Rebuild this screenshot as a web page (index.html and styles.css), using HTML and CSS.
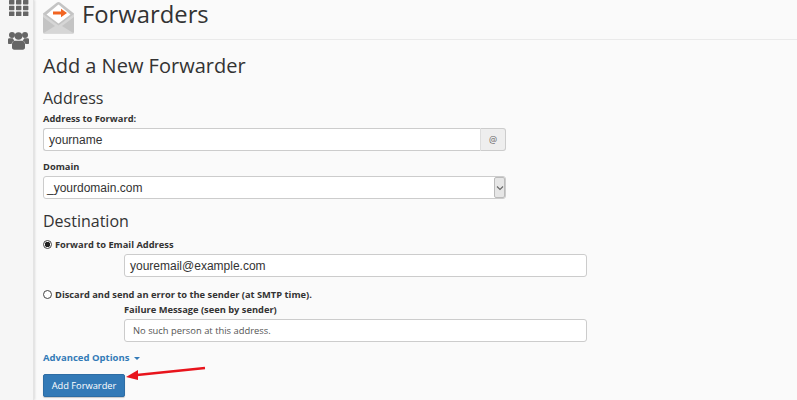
FILE: index.html
```html
<!DOCTYPE html>
<html lang="en">
<head>
<meta charset="utf-8">
<title>Forwarders</title>
<link rel="stylesheet" href="styles.css">
</head>
<body>
<div class="app">
  <nav class="sidebar">
    <svg class="nav-grid" width="20" height="16" viewBox="0 0 20 16"><g fill="#666"><rect x="0" y="0" width="5.4" height="4.4" rx=".6"/><rect x="7" y="0" width="5.4" height="4.4" rx=".6"/><rect x="14" y="0" width="5.4" height="4.4" rx=".6"/><rect x="0" y="5.8" width="5.4" height="4.4" rx=".6"/><rect x="7" y="5.8" width="5.4" height="4.4" rx=".6"/><rect x="14" y="5.8" width="5.4" height="4.4" rx=".6"/><rect x="0" y="11.6" width="5.4" height="4.4" rx=".6"/><rect x="7" y="11.6" width="5.4" height="4.4" rx=".6"/><rect x="14" y="11.6" width="5.4" height="4.4" rx=".6"/></g></svg>
    <svg class="nav-users" width="21" height="20" viewBox="0 0 21 20"><g fill="#666"><circle cx="4" cy="5" r="3"/><circle cx="17" cy="5" r="3"/><circle cx="10.5" cy="6" r="3.8"/><path d="M0 9.5C0 8.6.7 8.2 1.6 8.2h3.2c.4 1 .9 1.6 1.5 2.2-1.6.8-2.5 2-2.7 3.6H1c-.6 0-1-.4-1-1z"/><path d="M21 9.5c0-.9-.7-1.3-1.6-1.3h-3.2c-.4 1-.9 1.6-1.5 2.2 1.6.8 2.5 2 2.7 3.6H20c.6 0 1-.4 1-1z"/><path d="M7 10.8h7c1.8 0 3 1.4 3 3.4v3.4c0 1.3-.9 2.2-2.2 2.2H6.200C4.900 19.800 4 18.900 4 17.600v-3.400c0-2 1.200-3.400 3-3.400z"/></g></svg>
  </nav>
  <main class="main">
    <header class="page-head">
      <svg class="page-icon" width="33" height="33" viewBox="0 0 33 33"><path d="M1 12.500 15 1.500a2.500 2.500 0 0 1 3 0l14 11v18.500a1.500 1.500 0 0 1-1.500 1.500h-28A1.500 1.500 0 0 1 1 31z" fill="#c4c4c4"/><path d="M4.500 13.500 16.500 3.500l12 10-12 9z" fill="#fff"/><path d="M1 13l15.500 11.500L32 13v3L20 25l12 7.500H1L13 25 1 16z" fill="#d6d6d6"/><path d="M11 10.500h8V7.800l6 4.200-6 4.200v-2.700h-8z" fill="#f26522"/></svg>
      <h1 class="page-title">Forwarders</h1>
    </header>
    <h2 class="section-title">Add a New Forwarder</h2>
    <h3 class="sub-title first">Address</h3>
    <label class="field-label">Address to Forward:</label>
    <div class="input-group">
      <div class="input group-input">yourname</div>
      <div class="addon">@</div>
    </div>
    <label class="field-label domain-label">Domain</label>
    <div class="select-box">
      <span class="select-text">_yourdomain.com</span>
      <span class="select-btn"><svg width="8" height="6" viewBox="0 0 8 6"><path d="M1 1.500 4 4.500 7 1.500" fill="none" stroke="#666" stroke-width="1.100"/></svg></span>
    </div>
    <h3 class="sub-title dest">Destination</h3>
    <div class="radio-row"><span class="radio checked"></span><span class="radio-label">Forward to Email Address</span></div>
    <div class="indent email-wrap"><div class="input email-input">youremail@example.com</div></div>
    <div class="radio-row discard"><span class="radio"></span><span class="radio-label">Discard and send an error to the sender (at SMTP time).</span></div>
    <div class="indent">
      <label class="field-label fail-label">Failure Message (seen by sender)</label>
      <div class="input fail-input">No such person at this address.</div>
    </div>
    <a class="advanced">Advanced Options <span class="caret"></span></a>
    <div class="actions">
      <button class="btn">Add Forwarder</button>
      <svg class="arrow" width="82" height="20" viewBox="0 0 82 20"><path d="M80 4 12 11" stroke="#e8141c" stroke-width="2.400" fill="none"/><path d="M1 13 13 6v10z" fill="#e8141c"/></svg>
    </div>
  </main>
</div>
</body>
</html>
```

FILE: styles.css
```css
* { box-sizing: border-box; }
html, body { margin: 0; height: 100%; overflow: hidden; }
body { background: #fafafa; font-family: "Open Sans", sans-serif; color: #333; }
.app { display: flex; height: 400px; }
.sidebar {
  width: 34px; flex: none; background: #f6f6f6;
  border-right: 1px solid #e4e4e4;
  box-shadow: 1px 0 2px rgba(0,0,0,.12);
  display: flex; flex-direction: column; align-items: center;
}
.nav-grid { margin-left: 4px; margin-bottom: 14px; }
.nav-users { margin-left: 4px; }
.main { flex: 1; padding-left: 9px; min-width: 0; }
.page-head {
  display: flex; align-items: flex-start; gap: 7px; height: 40px;
  border-bottom: 1px solid #eaeaea;
}
.page-icon { flex: none; margin: 1px 0 0 -1px; }
.page-title { margin: 0; font-size: 23.800px; font-weight: 400; line-height: 29px; color: #333; }
.section-title { margin: 13px 0 0; font-size: 20px; font-weight: 400; line-height: 26px; }
.sub-title { margin: 0; font-size: 16px; font-weight: 400; line-height: 22px; }
.sub-title.first { margin: 8px 0 2px; }
.field-label { display: block; height: 14px; padding-top: 1px; font-size: 9.300px; font-weight: 700; line-height: 14px; color: #333; }
.input-group { display: flex; width: 463px; height: 23px; margin-top: 3px; }
.input {
  background: #fff; border: 1px solid #ccc; border-radius: 3px;
  font-family: "Liberation Sans", Arial, sans-serif;
  font-size: 12px; line-height: 22px; padding-left: 5px; color: #333;
}
.group-input { flex: 1; border-radius: 3px 0 0 3px; border-right: 0; }
.addon {
  width: 26px; background: #eee; border: 1px solid #ccc; border-left: 1px solid #ddd;
  border-radius: 0 3px 3px 0; font-size: 9px; text-align: center; line-height: 21px; color: #666;
}
.domain-label { margin-top: 8px; }
.select-box {
  display: flex; justify-content: space-between; width: 463px; height: 23px; margin-top: 3px;
  background: #fff; border: 1px solid #ccc; border-radius: 3px;
  font-family: "Liberation Sans", Arial, sans-serif; font-size: 12px; line-height: 22px;
}
.select-text { padding-left: 3px; }
.select-btn {
  width: 11px; background: #e6e6e6; border: 1px solid #bbb; border-radius: 2px;
  display: flex; align-items: center; justify-content: center;
}
.sub-title.dest { margin-top: 11px; }
.radio-row { display: flex; align-items: center; gap: 3px; height: 14px; margin-top: 5px; }
.radio-label { height: 14px; padding-top: 1px; font-size: 9.300px; font-weight: 700; line-height: 14px; }
.radio { width: 9px; height: 9px; border: 1px solid #444; border-radius: 50%; background: #fff; flex: none; }
.radio.checked { background: radial-gradient(circle, #222 0 2.500px, #fff 3px); }
.indent { padding-left: 81px; }
.email-wrap { margin-top: 3px; }
.email-input { width: 463px; height: 23px; padding-left: 5px; }
.discard { margin-top: 10px; }
.field-label.fail-label { margin-top: 2px; padding-top: 0; }
.fail-input {
  width: 463px; height: 23px; margin-top: 2px; padding-left: 8px; color: #555;
  font-family: "Open Sans", sans-serif; font-size: 9.400px; line-height: 21px;
}
.advanced { display: block; margin-top: 9px; font-size: 9.500px; font-weight: 700; line-height: 14px; color: #337ab7; }
.caret {
  display: inline-block; width: 0; height: 0; margin-left: 2px; vertical-align: middle;
  border-top: 3px solid #337ab7; border-left: 3px solid transparent; border-right: 3px solid transparent;
}
.actions { display: flex; align-items: flex-start; margin-top: 9px; }
.btn {
  width: 82px; height: 23px; padding: 0; background: #337ab7; border: 1px solid #2e6da4; border-radius: 2px;
  color: #fff; font-family: inherit; font-size: 9.300px; line-height: 21px;
  box-shadow: 0 1px 1px rgba(0,0,0,.2);
}
.arrow { margin-top: -10px; flex: none; }
```
